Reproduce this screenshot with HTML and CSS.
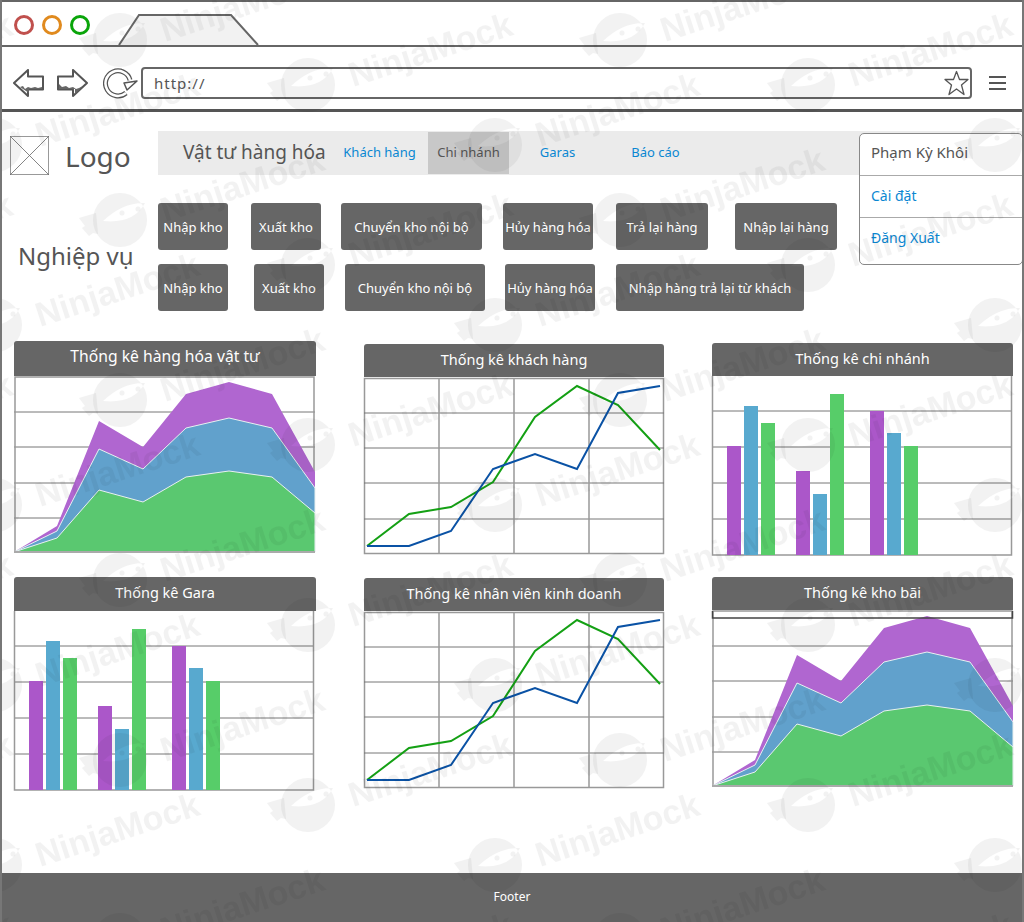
FILE: index.html
```html
<!DOCTYPE html>
<html lang="vi">
<head>
  <meta charset="utf-8">
  <title>Thống kê</title>
  <link rel="stylesheet" href="styles.css">
</head>
<body>
  <!-- shared chart drawings -->
  <svg class="defs" width="0" height="0" aria-hidden="true">
    <defs>
      <g id="area-chart">
        <path class="grid" d="M0 36H301M0 71H301M0 107H301M0 142H301"/>
        <path class="frame" d="M1 177V1H300V177"/>
        <polygon class="fill-purple" points="0,176 43,150 85,45 129,71 172,18 215,6 258,18 301,96 301,176"/>
        <polygon class="fill-blue" points="0,176 43,155 85,73 129,93 172,52 215,42 258,52 301,112 301,176"/>
        <polygon class="fill-green" points="0,176 43,162 85,114 129,126 172,101 215,95 258,101 301,137 301,176"/>
        <path class="base" d="M0 176H301"/>
      </g>
      <g id="line-chart">
        <rect class="frame" x="0.5" y="0.5" width="299" height="175"/>
        <path class="grid" d="M0 35H300M0 70H300M0 105H300M0 141H300"/>
        <path class="grid-v" d="M75 0V176M150 0V176M225 0V176"/>
        <polyline class="line-green" points="3,168 45,136 87,129 129,104 171,39 213,8 254,27 296,72"/>
        <polyline class="line-blue" points="3,168 45,168 87,153 129,91 171,76 213,91 254,15 296,8"/>
      </g>
      <g id="bar-chart">
        <path class="grid" d="M0 35H300M0 71H300M0 107H300M0 143H300"/>
        <path class="frame" d="M0.5 0V179H299.5V0"/>
        <rect class="bar-purple" x="15" y="70" width="14" height="109"/>
        <rect class="bar-blue" x="32" y="30" width="14" height="149"/>
        <rect class="bar-green" x="49" y="47" width="14" height="132"/>
        <rect class="bar-purple" x="84" y="95" width="14" height="84"/>
        <rect class="bar-blue" x="101" y="118" width="14" height="61"/>
        <rect class="bar-green" x="118" y="18" width="14" height="161"/>
        <rect class="bar-purple" x="158" y="35" width="14" height="144"/>
        <rect class="bar-blue" x="175" y="57" width="14" height="122"/>
        <rect class="bar-green" x="192" y="70" width="14" height="109"/>
      </g>
    </defs>
  </svg>

  <div class="window">
    <header class="chrome">
      <div class="tabs">
        <span class="dot dot-red"></span>
        <span class="dot dot-orange"></span>
        <span class="dot dot-green"></span>
        <svg class="tab" width="142" height="33" viewBox="0 0 142 33">
          <path d="M1 33L21 3H113L140 33" fill="#f2f2f2" stroke="#666" stroke-width="2"/>
        </svg>
      </div>
      <div class="toolbar">
        <svg class="icon-arrow" width="32" height="28" viewBox="0 0 32 28">
          <path d="M1 14L15 1V7.500H30V20.500H15V27Z" fill="#fff" stroke="#555" stroke-width="2" stroke-linejoin="round"/>
          <path d="M7 18l3-1 2 3 3-2 3 1 4-1 3 1 4-1v2H16v4z" fill="#666"/>
        </svg>
        <svg class="icon-arrow icon-forward" width="32" height="28" viewBox="0 0 32 28">
          <path d="M31 14L17 1V7.500H2V20.500H17V27Z" fill="#fff" stroke="#555" stroke-width="2" stroke-linejoin="round"/>
          <path d="M3 15l3 3 4-1 3 2 4-1 3 2 3-1 4-2-8 8v-5H3z" fill="#666"/>
        </svg>
        <svg class="icon-reload" width="36" height="32" viewBox="0 0 36 32">
          <path d="M23 26A12.500 12.500 0 1 1 27 13" fill="none" stroke="#555" stroke-width="5"/>
          <path d="M23 26A12.500 12.500 0 1 1 27 13" fill="none" stroke="#fff" stroke-width="2.500"/>
          <path d="M21 16L34 14L24 23Z" fill="#fff" stroke="#555" stroke-width="1.500" stroke-linejoin="round"/>
        </svg>
        <div class="urlbar">
          <span class="url-text">http://</span>
          <svg class="icon-star" width="25" height="26" viewBox="0 0 25 26">
            <path d="M12.500 1.500L15.500 9.500H24L17.500 15L20 24.500L12.500 19L5 24.500L7.500 15L1 9.500H9.500Z" fill="#fff" stroke="#555" stroke-width="1.300" stroke-linejoin="round"/>
          </svg>
        </div>
        <div class="burger"><span></span><span></span><span></span></div>
      </div>
    </header>

    <div class="topbar">
      <div class="brand">
        <svg class="logo-box" width="39" height="39" viewBox="0 0 39 39">
          <rect x="0.500" y="0.500" width="38" height="38" fill="#fff" stroke="#999"/>
          <path d="M0 0L39 39M39 0L0 39" stroke="#666" stroke-width="0.800"/>
        </svg>
        <span class="logo-text">Logo</span>
      </div>
      <nav class="nav">
        <span class="nav-title">Vật tư hàng hóa</span>
        <a class="nav-item">Khách hàng</a>
        <a class="nav-item is-active">Chi nhánh</a>
        <a class="nav-item">Garas</a>
        <a class="nav-item nav-last">Báo cáo</a>
      </nav>
    </div>

    <div class="user-menu">
      <div class="user-row user-name">Phạm Kỳ Khôi</div>
      <a class="user-row">Cài đặt</a>
      <a class="user-row">Đăng Xuất</a>
    </div>

    <section class="ops">
      <h2 class="ops-label">Nghiệp vụ</h2>
      <div class="ops-rows">
        <div class="ops-row ops-row-a">
          <button class="op">Nhập kho</button>
          <button class="op">Xuất kho</button>
          <button class="op">Chuyển kho nội bộ</button>
          <button class="op">Hủy hàng hóa</button>
          <button class="op">Trả lại hàng</button>
          <button class="op">Nhập lại hàng</button>
        </div>
        <div class="ops-row ops-row-b">
          <button class="op">Nhập kho</button>
          <button class="op">Xuất kho</button>
          <button class="op">Chuyển kho nội bộ</button>
          <button class="op">Hủy hàng hóa</button>
          <button class="op">Nhập hàng trả lại từ khách</button>
        </div>
      </div>
    </section>

    <main class="charts">
      <article class="card">
        <h3 class="card-title card-title-tall">Thống kê hàng hóa vật tư</h3>
        <svg class="plot" width="301" height="177" viewBox="0 0 301 177"><use href="#area-chart"/></svg>
      </article>
      <article class="card card-low">
        <h3 class="card-title">Thống kê khách hàng</h3>
        <svg class="plot plot-gap" width="300" height="176" viewBox="0 0 300 176"><use href="#line-chart"/></svg>
      </article>
      <article class="card card-mid">
        <h3 class="card-title">Thống kê chi nhánh</h3>
        <svg class="plot" width="300" height="180" viewBox="0 0 300 180"><use href="#bar-chart"/></svg>
      </article>
      <article class="card">
        <h3 class="card-title card-title-34">Thống kê Gara</h3>
        <svg class="plot" width="300" height="180" viewBox="0 0 300 180"><use href="#bar-chart"/></svg>
      </article>
      <article class="card card-low-1">
        <h3 class="card-title">Thống kê nhân viên kinh doanh</h3>
        <svg class="plot plot-gap" width="300" height="176" viewBox="0 0 300 176"><use href="#line-chart"/></svg>
      </article>
      <article class="card">
        <h3 class="card-title">Thống kê kho bãi</h3>
        <svg class="plot" width="301" height="177" viewBox="0 0 301 177">
          <use href="#area-chart"/>
          <path d="M0.500 1V8H300.500V1" fill="none" stroke="#444" stroke-width="1.500"/>
        </svg>
      </article>
    </main>

    <footer class="footer">Footer</footer>

    <!-- watermark lies over the whole page -->
    <svg class="watermark" width="1024" height="922" aria-hidden="true">
      <defs>
        <g id="wm-unit">
          <path fill-rule="evenodd" d="M-27 0A27 27 0 1 0 27 0A27 27 0 1 0 -27 0ZM-17 1Q3 -18 25 -17Q14 4 -17 1Z"/>
          <path d="M-24 -7L-41 -2L-35 6L-38 8L-31 16L-27 13L-22 14Z"/>
          <circle cx="2" cy="-7" r="2.500"/>
          <circle cx="18" cy="-11" r="2.500"/>
          <text class="wm-text" x="45" y="2" transform="rotate(-18 45 2)">NinjaMock</text>
        </g>
        <pattern id="wm-tile" width="500" height="180" patternUnits="userSpaceOnUse">
          <use href="#wm-unit" x="120" y="40"/>
          <use href="#wm-unit" x="120" y="220"/>
          <use href="#wm-unit" x="308" y="85"/>
          <use href="#wm-unit" x="-192" y="85"/>
          <use href="#wm-unit" x="495" y="145"/>
          <use href="#wm-unit" x="-5" y="145"/>
        </pattern>
      </defs>
      <rect width="1024" height="922" fill="url(#wm-tile)"/>
    </svg>
  </div>
</body>
</html>
```

FILE: styles.css
```css
* {
  box-sizing: border-box;
}
body {
  margin: 0;
  background-color: #fff;
  color: #555;
  font-family: "Noto Sans", "Liberation Sans", sans-serif;
}
.defs {
  position: absolute;
}
.window {
  position: relative;
  display: flex;
  flex-direction: column;
  width: 1024px;
  height: 922px;
  overflow: hidden;
  border-left: 2px solid #777;
  border-right: 2px solid #777;
}

/* browser chrome */
.chrome {
  border-top: 2px solid #666;
  border-bottom: 3px solid #555;
}
.tabs {
  display: flex;
  align-items: center;
  gap: 8px;
  height: 45px;
  padding: 2px 0 0 12px;
  border-bottom: 2px solid #666;
}
.dot {
  width: 20px;
  height: 20px;
  border: 3px solid;
  border-radius: 50%;
}
.dot-red {
  border-color: #c0504d;
}
.dot-orange {
  border-color: #e08a1e;
}
.dot-green {
  border-color: #0aa50a;
}
.tab {
  align-self: flex-end;
  margin-left: 20px;
}
.toolbar {
  display: flex;
  align-items: center;
  height: 62px;
  padding: 10px 0 0 11px;
}
.icon-forward {
  margin-left: 11px;
}
.icon-reload {
  margin-left: 15px;
}
.urlbar {
  display: flex;
  align-items: center;
  justify-content: space-between;
  width: 831px;
  height: 32px;
  margin-left: 2px;
  padding: 0 1px 0 11px;
  border: 2px solid #666;
  border-radius: 4px;
}
.url-text {
  font-size: 15px;
  letter-spacing: 1px;
}
.burger {
  display: flex;
  flex-direction: column;
  gap: 4px;
  width: 17px;
  margin-left: 17px;
}
.burger span {
  height: 2px;
  background-color: #555;
}

/* logo and navigation */
.topbar {
  display: flex;
  align-items: flex-start;
  margin-top: 19px;
}
.brand {
  display: flex;
  align-items: center;
  gap: 16px;
  width: 156px;
  padding: 4px 0 0 8px;
}
.logo-text {
  margin-top: 2px;
  font-size: 28px;
  line-height: 39px;
}
.nav {
  flex: 1;
  display: flex;
  align-items: center;
  height: 44px;
  background-color: #ebebeb;
}
.nav-title {
  width: 181px;
  padding: 0 0 2px 25px;
  font-size: 19px;
  white-space: nowrap;
}
.nav-item {
  width: 81px;
  height: 42px;
  margin-right: 8px;
  color: #0a87d2;
  font-size: 13px;
  line-height: 40px;
  text-align: center;
  white-space: nowrap;
}
.nav-last {
  margin-left: 9px;
}
.is-active {
  background-color: #c8c8c8;
  color: #555;
}
.user-menu {
  position: absolute;
  top: 133px;
  right: -1px;
  width: 164px;
  height: 132px;
  background-color: #fff;
  border: 1px solid #888;
  border-radius: 5px;
}
.user-row {
  display: block;
  height: 42px;
  padding-left: 11px;
  color: #0a87d2;
  font-size: 14px;
  line-height: 39px;
  border-bottom: 1px solid #aaa;
}
.user-row:last-child {
  border-bottom: 0;
}
.user-name {
  color: #555;
  font-size: 15px;
  line-height: 37px;
}

/* quick actions */
.ops {
  display: flex;
  align-items: center;
  margin-top: 27px;
}
.ops-label {
  width: 156px;
  margin: 0;
  padding: 0 0 4px 16px;
  font-size: 24px;
  font-weight: 400;
}
.ops-rows {
  display: flex;
  flex-direction: column;
  gap: 14px;
}
.ops-row {
  display: flex;
}
.op {
  height: 47px;
  padding: 0;
  background-color: #666;
  border: 0;
  border-radius: 3px;
  color: #fff;
  font-family: inherit;
  font-size: 13px;
  white-space: nowrap;
}
.ops-row-a .op:nth-child(1) { width: 70px; }
.ops-row-a .op:nth-child(2) { width: 70px; margin-left: 23px; }
.ops-row-a .op:nth-child(3) { width: 141px; margin-left: 20px; }
.ops-row-a .op:nth-child(4) { width: 90px; margin-left: 21px; }
.ops-row-a .op:nth-child(5) { width: 92px; margin-left: 23px; }
.ops-row-a .op:nth-child(6) { width: 102px; margin-left: 27px; }
.ops-row-b .op:nth-child(1) { width: 70px; }
.ops-row-b .op:nth-child(2) { width: 70px; margin-left: 26px; }
.ops-row-b .op:nth-child(3) { width: 140px; margin-left: 21px; }
.ops-row-b .op:nth-child(4) { width: 90px; margin-left: 20px; }
.ops-row-b .op:nth-child(5) { width: 188px; margin-left: 21px; }

/* charts */
.charts {
  display: grid;
  grid-template-columns: 302px 300px 301px;
  grid-template-rows: 236px auto;
  column-gap: 48px;
  margin: 30px 0 0 12px;
}
.card-low {
  margin-top: 3px;
}
.card-mid {
  margin-top: 2px;
}
.card-low-1 {
  margin-top: 1px;
}
.card-title {
  height: 33px;
  margin: 0;
  background-color: #666;
  border-radius: 3px 3px 0 0;
  color: #fff;
  font-size: 14.5px;
  font-weight: 400;
  line-height: 31px;
  text-align: center;
  white-space: nowrap;
}
.card-title-tall {
  height: 35px;
  font-size: 15.7px;
}
.card-title-34 {
  height: 34px;
}
.plot {
  display: block;
  overflow: visible;
}
.plot-gap {
  margin-top: 1px;
}
.grid {
  fill: none;
  stroke: #777;
  stroke-width: 1;
}
.grid-v {
  fill: none;
  stroke: #999;
  stroke-width: 1.5;
}
.frame {
  fill: none;
  stroke: #999;
  stroke-width: 1.5;
}
.base {
  stroke: #aaa;
  stroke-width: 2;
}
.fill-purple {
  fill: #b066d0;
}
.fill-blue {
  fill: #61a1cc;
  stroke: #e8f0f0;
  stroke-width: 1;
}
.fill-green {
  fill: #5ac870;
  stroke: #e8f0f0;
  stroke-width: 1;
}
.line-green {
  fill: none;
  stroke: #14a014;
  stroke-width: 2;
}
.line-blue {
  fill: none;
  stroke: #0a52a5;
  stroke-width: 2;
}
.bar-purple {
  fill: #ab57c9;
}
.bar-blue {
  fill: #58a9cf;
}
.bar-green {
  fill: #57cd69;
}

/* footer */
.footer {
  margin-top: auto;
  height: 49px;
  background-color: #666;
  color: #fff;
  font-size: 12px;
  line-height: 47px;
  text-align: center;
}

/* watermark */
.watermark {
  position: absolute;
  top: 0;
  left: -2px;
  pointer-events: none;
}
.watermark g,
.watermark text {
  fill: rgba(0, 0, 0, 0.05);
}
.wm-text {
  font-family: "Liberation Sans", sans-serif;
  font-size: 34px;
  font-weight: 700;
}
```
